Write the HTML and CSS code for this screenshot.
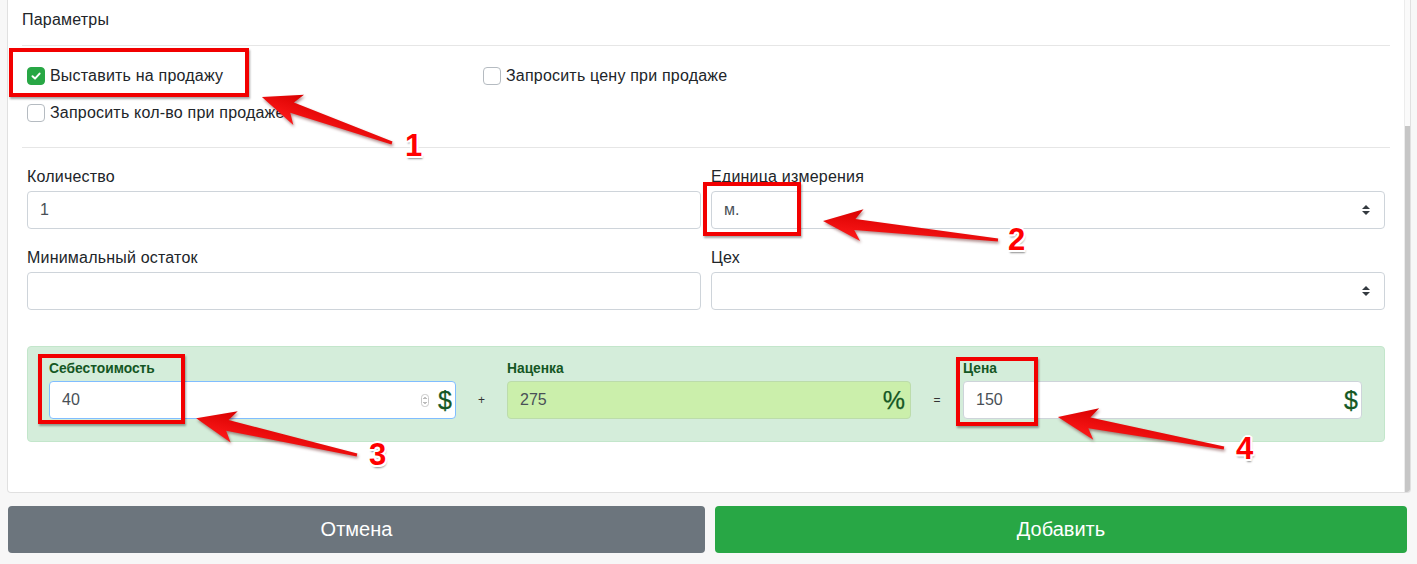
FILE: index.html
```html
<!DOCTYPE html>
<html lang="ru">
<head>
<meta charset="utf-8">
<title>Параметры</title>
<link rel="stylesheet" href="styles.css">
</head>
<body>
<div class="page">
  <div class="card">
    <div class="card-content">
      <div class="section-title">Параметры</div>
      <div class="checks">
        <label class="check">
          <span class="cb cb-on"><svg width="12" height="12" viewBox="0 0 12 12"><path d="M2.5 6.3 L5 8.6 L9.6 3.6" fill="none" stroke="#fff" stroke-width="2" stroke-linecap="round" stroke-linejoin="round"/></svg></span>
          <span>Выставить на продажу</span>
        </label>
        <label class="check">
          <span class="cb"></span>
          <span>Запросить цену при продаже</span>
        </label>
        <span></span>
        <label class="check">
          <span class="cb"></span>
          <span>Запросить кол-во при продаже</span>
        </label>
      </div>
      <div class="fields">
        <div class="field">
          <div class="lbl">Количество</div>
          <div class="control">1</div>
        </div>
        <div class="field">
          <div class="lbl">Единица измерения</div>
          <div class="control select"><span class="val">м.</span><svg width="8" height="10" viewBox="0 0 8 10"><path d="M4 0 L8 4 H0Z M0 6 H8 L4 10Z" fill="#343a40"/></svg></div>
        </div>
        <div class="field">
          <div class="lbl">Минимальный остаток</div>
          <div class="control"></div>
        </div>
        <div class="field">
          <div class="lbl">Цех</div>
          <div class="control select"><span class="val"></span><svg width="8" height="10" viewBox="0 0 8 10"><path d="M4 0 L8 4 H0Z M0 6 H8 L4 10Z" fill="#343a40"/></svg></div>
        </div>
      </div>
      <div class="price-box">
        <div class="pfield">
          <div class="plbl">Себестоимость</div>
          <div class="ig ig-focus">
            <span class="val">40</span>
            <svg class="spin" width="8" height="13" viewBox="0 0 8 13"><rect x="0.5" y="0.5" width="7" height="12" rx="3" fill="#fff" stroke="#c9c9c9"/><path d="M2.5 5 L4 3.5 L5.5 5 M2.5 8 L4 9.5 L5.5 8" fill="none" stroke="#666" stroke-width="0.9"/></svg>
            <span class="addon">$</span>
          </div>
        </div>
        <div class="sep">+</div>
        <div class="pfield">
          <div class="plbl">Наценка</div>
          <div class="ig ig-lime">
            <span class="val">275</span>
            <span class="addon">%</span>
          </div>
        </div>
        <div class="sep">=</div>
        <div class="pfield">
          <div class="plbl">Цена</div>
          <div class="ig">
            <span class="val">150</span>
            <span class="addon">$</span>
          </div>
        </div>
      </div>
    </div>
    <div class="scrollbar"><div class="thumb"></div></div>
  </div>
  <div class="actions">
    <button class="btn btn-cancel">Отмена</button>
    <button class="btn btn-add">Добавить</button>
  </div>
</div>

<div class="mark mark-1"></div>
<div class="mark mark-2"></div>
<div class="mark mark-3"></div>
<div class="mark mark-4"></div>

<svg class="arrows" width="1417" height="564" viewBox="0 0 1417 564">
  <defs>
    <linearGradient id="rg" x1="0" y1="0" x2="0" y2="1">
      <stop offset="0" stop-color="#ff1a1a"/>
      <stop offset="1" stop-color="#d80000"/>
    </linearGradient>
  </defs>
  <polygon transform="translate(392 143) rotate(199.5)" points="0,-1.5 106,-5.5 99,-16 138,0 99,16 106,5.5 0,1.5" fill="url(#rg)"/>
  <polygon transform="translate(998 240) rotate(186.2)" points="0,-1.5 144,-5.5 137,-16 176,0 137,16 144,5.5 0,1.5" fill="url(#rg)"/>
  <polygon transform="translate(357 455) rotate(192.9)" points="0,-1.5 133,-5.5 126,-16 165,0 126,16 133,5.5 0,1.5" fill="url(#rg)"/>
  <polygon transform="translate(1224 448) rotate(190.6)" points="0,-1.5 137,-5.5 130,-16 169,0 130,16 137,5.5 0,1.5" fill="url(#rg)"/>
</svg>

<div class="num num-1">1</div>
<div class="num num-2">2</div>
<div class="num num-3">3</div>
<div class="num num-4">4</div>
</body>
</html>
```

FILE: styles.css
```css
html, body {
  margin: 0;
  padding: 0;
}
body {
  position: relative;
  width: 1417px;
  height: 564px;
  overflow: hidden;
  background: #f7f7f7;
  font-family: "Liberation Sans", Arial, sans-serif;
  color: #212529;
}
.page {
  padding-left: 7px;
}
.card {
  width: 1404px;
  height: 493px;
  box-sizing: border-box;
  background: #fff;
  border: 1px solid #e0e0e0;
  border-top: 0;
  border-radius: 0 0 4px 4px;
  display: flex;
  overflow: hidden;
}
.card-content {
  flex: 1;
  padding: 8px 14px 0 14px;
}
.scrollbar {
  width: 6px;
  box-sizing: border-box;
  border-left: 1px solid #ececec;
  background: #fafafa;
  padding-top: 126px;
  display: flex;
  flex-direction: column;
}
.thumb {
  flex: 1;
  background: #c6c6c6;
}
.section-title {
  font-size: 16px;
  line-height: 24px;
  height: 24px;
  padding-bottom: 13px;
  border-bottom: 1px solid #e6e6e6;
  letter-spacing: 0.2px;
}
.checks {
  display: grid;
  grid-template-columns: 456px 456px 1fr;
  grid-auto-rows: 37px;
  padding: 11px 5px 16px;
  border-bottom: 1px solid #e6e6e6;
}
.check {
  display: flex;
  align-items: center;
  gap: 5px;
  font-size: 16px;
  letter-spacing: 0.2px;
  color: #212529;
}
.cb {
  width: 18px;
  height: 18px;
  box-sizing: border-box;
  border: 1px solid #b5bbc1;
  border-radius: 4px;
  background: #fff;
  display: flex;
  align-items: center;
  justify-content: center;
  flex: 0 0 auto;
}
.cb-on {
  background: #28a745;
  border-color: #28a745;
}
.fields {
  padding: 17px 5px 0;
  display: grid;
  grid-template-columns: 1fr 1fr;
  column-gap: 10px;
  row-gap: 17px;
}
.lbl {
  font-size: 16px;
  line-height: 24px;
  margin-bottom: 2px;
  letter-spacing: 0.2px;
}
.control {
  height: 38px;
  box-sizing: border-box;
  border: 1px solid #ced4da;
  border-radius: 4px;
  padding: 0 12px;
  display: flex;
  align-items: center;
  font-size: 16px;
  color: #495057;
  background: #fff;
}
.select {
  padding-right: 14px;
}
.select .val {
  flex: 1;
}
.price-box {
  margin: 36px 5px 0;
  border: 1px solid #c3e6cb;
  background: #d4edda;
  border-radius: 4px;
  padding: 12px 22px 22px 21px;
  display: grid;
  grid-template-columns: 407px 51px 404px 52px 1fr;
  align-items: end;
}
.plbl {
  font-size: 13.8px;
  font-weight: bold;
  color: #155724;
  line-height: 19px;
  margin-bottom: 3px;
}
.sep {
  height: 38px;
  display: flex;
  align-items: center;
  justify-content: center;
  font-size: 12px;
  color: #333;
}
.ig {
  height: 38px;
  box-sizing: border-box;
  display: flex;
  align-items: center;
  border: 1px solid #ced4da;
  border-radius: 4px;
  background: #fff;
  padding: 0 3px 0 12px;
  font-size: 16px;
  color: #495057;
}
.ig .val {
  flex: 1;
}
.ig-focus {
  border-color: #80bdff;
}
.ig-lime {
  background: #cbefab;
  border-color: #bcdcab;
  padding-right: 5px;
}
.spin {
  margin-right: 9px;
}
.addon {
  font-size: 25px;
  line-height: 1;
  color: #155724;
  -webkit-text-stroke: 0.25px #155724;
}
.actions {
  display: flex;
  gap: 10px;
  padding: 13px 10px 0 1px;
}
.btn {
  height: 47px;
  border: 0;
  border-radius: 4px;
  color: #fff;
  font-family: "Liberation Sans", Arial, sans-serif;
  font-size: 20px;
  padding: 0;
}
.btn-cancel {
  flex: 0 0 697px;
  background: #6c757d;
}
.btn-add {
  flex: 1;
  background: #28a745;
}
.mark {
  position: absolute;
  box-sizing: border-box;
  border: 4px solid #f20000;
  box-shadow: 1px 2px 2px rgba(0, 0, 0, 0.35);
}
.mark-1 { left: 9px; top: 48px; width: 240px; height: 49px; }
.mark-2 { left: 703px; top: 182px; width: 98px; height: 54px; }
.mark-3 { left: 38px; top: 354px; width: 147px; height: 70px; }
.mark-4 { left: 956px; top: 357px; width: 82px; height: 69px; }
.arrows {
  position: absolute;
  left: 0;
  top: 0;
  filter: drop-shadow(1px 2px 1.5px rgba(80, 0, 0, 0.45));
}
.num {
  position: absolute;
  font-family: "Liberation Sans", Arial, sans-serif;
  font-weight: bold;
  font-size: 31px;
  line-height: 30px;
  color: #f00;
  text-shadow: -1.5px -1.5px 0 #fff, 1.5px -1.5px 0 #fff, -1.5px 1.5px 0 #fff, 1.5px 1.5px 0 #fff, 0 2px 0 #fff, 2px 0 0 #fff, -2px 0 0 #fff, 0 -2px 0 #fff, 1px 3px 2px rgba(0, 0, 0, 0.45);
}
.num-1 { left: 405px; top: 131px; }
.num-2 { left: 1008px; top: 225px; }
.num-3 { left: 369px; top: 440px; }
.num-4 { left: 1236px; top: 434px; }
```
